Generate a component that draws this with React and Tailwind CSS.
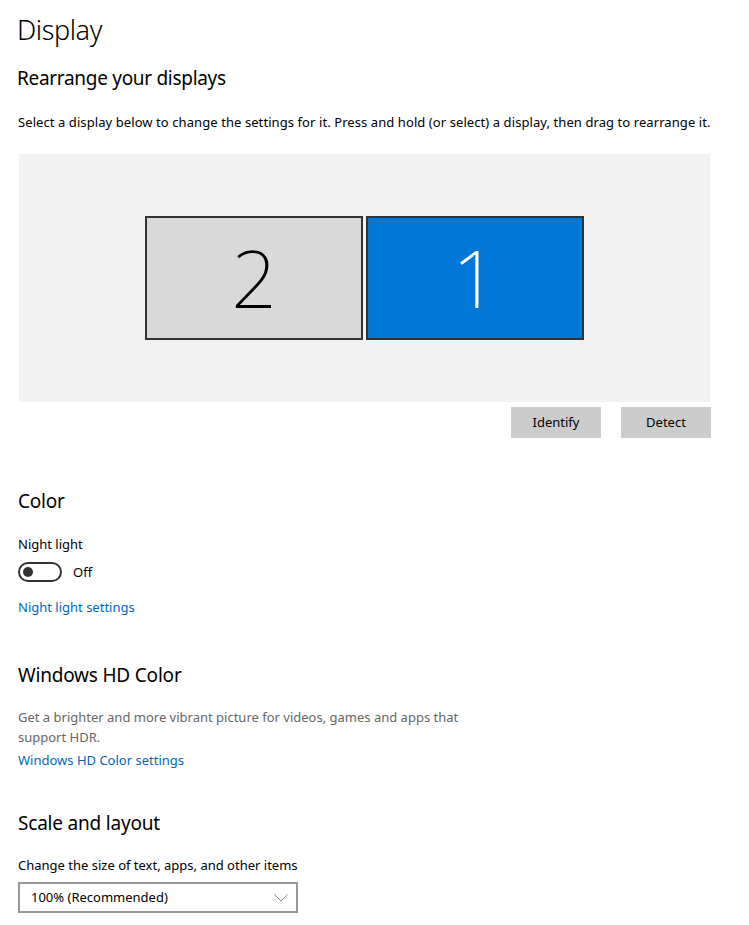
import React, { useState } from 'react';

const font = { fontFamily: '"Noto Sans", "Open Sans", sans-serif' };

const Monitor = ({ num, active, onClick }) => (
    <div
        onClick={onClick}
        className={`w-[218px] h-[124px] border-2 border-[#333333] flex items-center justify-center ${active ? 'bg-[#0078d7] text-white' : 'bg-[#d9d9d9] text-black'}`}
    >
        <span className="text-[80px] font-extralight leading-none pb-[2px]">{num}</span>
    </div>
);

const App = () => {
    const [selected, setSelected] = useState(1);
    const [nightLight, setNightLight] = useState(false);

    return (
        <div className="bg-white min-h-screen w-[749px] h-[925px] overflow-hidden px-[18px] text-black" style={font}>
            <h1 className="pt-[10px] text-[27px] leading-[40px] font-light tracking-[-0.4px] -ml-px">Display</h1>

            <h2 className="mt-[14px] text-[19px] leading-[28px] tracking-[-0.3px] -ml-px">Rearrange your displays</h2>
            <p className="mt-[20px] text-[13px] leading-[20px] tracking-[0.08px] whitespace-nowrap">
                Select a display below to change the settings for it. Press and hold (or select) a display, then drag to rearrange it.
            </p>

            {/* display arrangement canvas */}
            <div className="mt-[22px] ml-px w-[691px] h-[248px] bg-[#f2f2f2] flex items-center justify-center gap-[3px]">
                <Monitor num="2" active={selected === 2} onClick={() => setSelected(2)} />
                <Monitor num="1" active={selected === 1} onClick={() => setSelected(1)} />
            </div>

            <div className="mt-[5px] w-[693px] flex justify-end gap-[20px]">
                <button className="w-[90px] h-[31px] bg-[#cccccc] text-[13px] text-black">Identify</button>
                <button className="w-[90px] h-[31px] bg-[#cccccc] text-[13px] text-black">Detect</button>
            </div>

            <h2 className="mt-[49px] text-[19px] leading-[28px] tracking-[-0.2px]">Color</h2>
            <p className="mt-[19px] text-[13px] leading-[20px]">Night light</p>
            <div className="mt-[8px] flex items-center gap-[11px]">
                <button
                    onClick={() => setNightLight(!nightLight)}
                    className={`w-[44px] h-[20px] rounded-full border-2 flex items-center px-[3px] ${nightLight ? 'bg-[#0078d7] border-[#0078d7] justify-end' : 'border-[#333333] justify-start'}`}
                >
                    <span className={`w-[10px] h-[10px] rounded-full ${nightLight ? 'bg-white' : 'bg-[#333333]'}`} />
                </button>
                <span className="text-[13px] leading-[20px]">{nightLight ? 'On' : 'Off'}</span>
            </div>
            <a href="#" className="block mt-[15px] text-[13px] leading-[20px] text-[#0067c0]">Night light settings</a>

            <h2 className="mt-[44px] text-[19px] leading-[28px] tracking-[-0.2px]">Windows HD Color</h2>
            <p className="mt-[18px] w-[470px] text-[13px] leading-[20px] text-[#666666]">
                Get a brighter and more vibrant picture for videos, games and apps that support HDR.
            </p>
            <a href="#" className="block mt-[3px] text-[13px] leading-[20px] text-[#0067c0]">Windows HD Color settings</a>

            <h2 className="mt-[39px] text-[19px] leading-[28px] tracking-[-0.2px]">Scale and layout</h2>
            <p className="mt-[18px] text-[13px] leading-[20px]">Change the size of text, apps, and other items</p>
            <div className="mt-[7px] w-[280px] h-[31px] border-2 border-[#999999] flex items-center justify-between pl-[11px] pr-[8px]">
                <span className="text-[13px]">100% (Recommended)</span>
                <svg width="14" height="8" viewBox="0 0 14 8" fill="none" stroke="#888888" strokeWidth="1">
                    <path d="M0.5 0.5 L7 7 L13.5 0.5" />
                </svg>
            </div>
        </div>
    );
};

export default App;
